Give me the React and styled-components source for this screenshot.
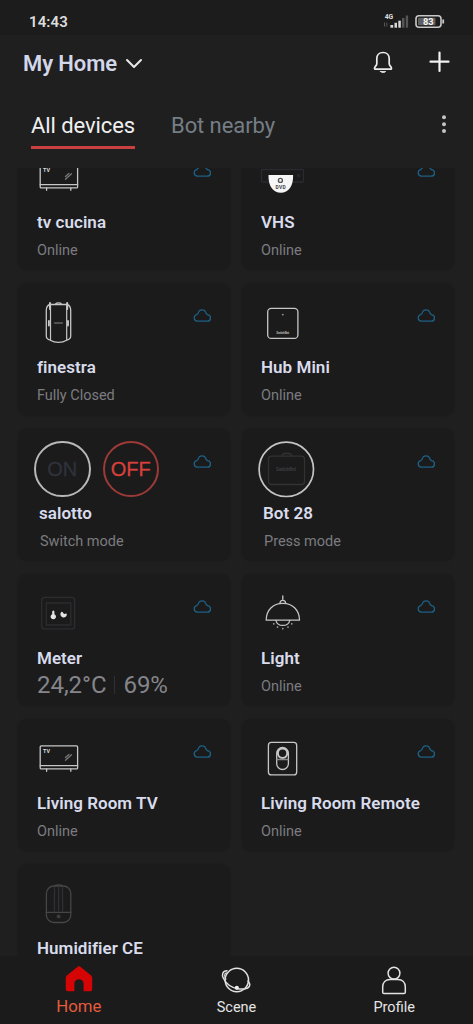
import React from "react";
import styled, { createGlobalStyle } from "styled-components";

const GlobalStyle = createGlobalStyle`
  *, *::before, *::after { box-sizing: border-box; }
  html, body { margin: 0; padding: 0; background: #1f1f1f; }
  body { font-family: Roboto, "Liberation Sans", sans-serif; }
  svg { display: block; flex: none; }
`;

const Screen = styled.div`
  display: flex;
  flex-direction: column;
  width: 473px;
  height: 1024px;
  overflow: hidden;
  background: #1f1f1f;
`;

const StatusBar = styled.div`
  display: flex;
  align-items: flex-start;
  justify-content: space-between;
  height: 35px;
  padding: 13px 28px 0 29px;
  background: #1c1c1c;
`;

const Clock = styled.div`
  font-size: 15px;
  line-height: 18px;
  font-weight: 600;
  letter-spacing: 0.1px;
  color: #dcdcdc;
`;

const Header = styled.header`
  display: flex;
  align-items: center;
  justify-content: space-between;
  height: 56px;
  padding: 0 23px 0 23px;
`;

const HomePicker = styled.div`
  display: flex;
  align-items: center;
  gap: 8px;
  padding-top: 1px;
  font-size: 22px;
  line-height: 28px;
  font-weight: 600;
  letter-spacing: -0.1px;
  color: #d3d7ea;
`;

const HeaderActions = styled.div`
  display: flex;
  align-items: center;
  gap: 35px;
  padding-bottom: 3px;
`;

const Tabs = styled.nav`
  display: flex;
  align-items: flex-start;
  height: 77px;
  padding: 19px 24px 0 31px;
`;

const Tab = styled.div`
  width: 104px;
  height: 39px;
  margin-right: 36px;
  padding-top: 2px;
  font-size: 22px;
  line-height: 28px;
  letter-spacing: -0.08px;
  white-space: nowrap;
  color: ${(p) => (p.$active ? "#f0f0f0" : "#757e85")};
  border-bottom: 3px solid ${(p) => (p.$active ? "#c8403f" : "transparent")};
`;

const MoreButton = styled.div`
  display: flex;
  margin: 4px 0 0 auto;
`;

const DeviceList = styled.main`
  flex: 1;
  min-height: 0;
  overflow: hidden;
`;

const DeviceGrid = styled.div`
  display: grid;
  grid-template-columns: 212px 212px;
  grid-auto-rows: 132.3px;
  gap: 13px 12px;
  margin: -30px 0 0 18px;
`;

const Card = styled.article`
  padding: 12px 18.6px 0 16px;
  border-radius: 9px;
  background: #1b1b1b;
  box-shadow: 0 0 2px #1c1c1c;
`;

const CardTop = styled.div`
  display: flex;
  justify-content: space-between;
  height: 57px;
`;

const Art = styled.div`
  display: flex;
  gap: 12px;
`;

const CloudSlot = styled.div`
  padding-top: 14px;
`;

const DeviceName = styled.div`
  margin: 4px 0 0 ${(p) => (p.$inset ? 5 : 3)}px;
  font-size: 17px;
  line-height: 22px;
  font-weight: 650;
  letter-spacing: 0.04px;
  white-space: nowrap;
  color: #d9dcec;
`;

const DeviceState = styled.div`
  margin: 10px 0 0 ${(p) => (p.$inset ? 6 : 3)}px;
  font-size: 14.5px;
  line-height: 16px;
  letter-spacing: -0.02px;
  white-space: nowrap;
  color: #7c7c80;
`;

const Reading = styled.div`
  display: flex;
  align-items: center;
  gap: 8px;
  margin: 3px 0 0 3px;
  font-size: 24px;
  line-height: 26px;
  letter-spacing: -0.05px;
  color: #85858b;
`;

const Divider = styled.span`
  width: 1px;
  height: 18px;
  background: #303034;
`;

const RoundButton = styled.div`
  display: flex;
  align-items: center;
  justify-content: center;
  width: 56.5px;
  height: 56.5px;
  padding-top: 1px;
  border: 2px solid ${(p) => (p.$off ? "#9c3a37" : "#b8b8b8")};
  border-radius: 50%;
  font-family: "Liberation Sans", Arial, sans-serif;
  font-size: 20px;
  color: ${(p) => (p.$off ? "#d8403b" : "#2e323b")};
  -webkit-text-stroke: 0.3px currentColor;
`;

const BottomNav = styled.footer`
  display: grid;
  grid-template-columns: repeat(3, 1fr);
  height: 68px;
  background: #1b1b1b;
`;

const NavItem = styled.div`
  display: flex;
  flex-direction: column;
  align-items: center;
  gap: 3px;
  padding-top: 9px;
  font-size: ${(p) => (p.$active ? 16.8 : 14.5)}px;
  line-height: 20px;
  color: ${(p) => (p.$active ? "#e35a3d" : "#e4e4e4")};
`;

const line = {
  fill: "none",
  stroke: "#c6c6c6",
  strokeWidth: 1.3,
  strokeLinecap: "round",
  strokeLinejoin: "round",
};

const ArtSvg = ({ children, ...rest }) => (
  <svg width="57" height="57" viewBox="0 0 57 57" {...line} {...rest}>
    {children}
  </svg>
);

const TvArt = () => (
  <ArtSvg>
    <rect x="6.2" y="14.9" width="37.4" height="23" rx="1" />
    <path d="M6.2 34.6H43.6M12.6 38v2.3M36.8 38v2.3" />
    <path d="M31.5 29.3l6-5.6M31.5 26.6l3.4-3.1" stroke="#777" />
    <text x="9" y="22" fontSize="5.4" fontWeight="700" fill="#ddd" stroke="none">TV</text>
  </ArtSvg>
);

const DvdArt = () => (
  <ArtSvg>
    <rect x="3.5" y="19.5" width="42" height="12.5" rx="1" stroke="#2a2a31" />
    <circle cx="40.5" cy="25.5" r="1" stroke="#2a2a31" />
    <path d="M10.5 25h24.6c.4 11-4.6 17.700-12.300 17.700S10.100 36 10.500 25z" fill="#f6f6f6" stroke="none" />
    <circle cx="22.4" cy="30.4" r="2" stroke="#555" strokeWidth="1.4" />
    <text x="17.6" y="39.2" fontSize="4.9" fontWeight="700" fill="#444" stroke="none" textLength="10">DVD</text>
  </ArtSvg>
);

const CurtainArt = () => (
  <ArtSvg>
    <path d="M16 9.5h17c2.500.7 3.700 3 3.700 6V41c0 2.500-1.500 3.600-4 4.200-2.400 1.500-4.800 2.200-8.200 2.200s-5.800-.7-8.200-2.200c-2.500-.6-4-1.700-4-4.200V15.500c0-3 1.200-5.300 3.700-6z" />
    <path d="M16.5 8.5V44.7M32.7 8.5V44.7" strokeWidth="1.2" />
    <path d="M16 8v6M33.2 8v6" strokeWidth="2" />
    <path d="M21.5 9c1-1.500 5-1.500 6 0" />
    <path d="M14.9 26v4.500M34 26v4.500" strokeWidth="1.9" />
    <path d="M20.5 28h8" stroke="#888" strokeWidth="1" />
  </ArtSvg>
);

const HubArt = () => (
  <ArtSvg>
    <rect x="9.7" y="13.4" width="30.2" height="30" rx="3.5" />
    <circle cx="24.8" cy="19.6" r=".9" fill="#999" stroke="none" />
    <text x="18.2" y="38.8" fontSize="3.3" fontWeight="700" fill="#aaa" stroke="none" textLength="13">SwitchBot</text>
  </ArtSvg>
);

const BotArt = () => (
  <ArtSvg stroke="#323236">
    <circle cx="28.3" cy="28.3" r="27.2" stroke="#c4c4c4" strokeWidth="1.7" />
    <rect x="10.5" y="15.2" width="36" height="28.3" rx="3" />
    <path d="M24 14.500c.5-3 9-3 9.500 0" />
    <text x="18" y="30.3" fontSize="4.5" fontWeight="700" fill="#3c3c40" stroke="none" textLength="20">SwitchBot</text>
  </ArtSvg>
);

const MeterArt = () => (
  <ArtSvg stroke="#2d2d31">
    <rect x="7.7" y="11.4" width="33" height="31.5" rx="3" />
    <rect x="12.3" y="17" width="24.5" height="22" />
    <g stroke="none" fill="#e4e4e4">
      <path d="M18.2 25.500q1.100-2 2.200 0v2.700a2.700 2.700 0 1 1-2.200 0z" />
      <path d="M27.500 25.800c1.600-.3 1.500 2 2.800 2.100.8 0 1.400-.6 2.400-.2a3.200 3.200 0 1 1-5.200-1.900z" />
    </g>
  </ArtSvg>
);

const LampArt = () => (
  <ArtSvg>
    <path d="M24.800 9.800v4.500M22 17.300c0-3.800 5.600-3.800 5.600 0" />
    <path d="M8.200 34.200C8.200 24 15 17.300 24.800 17.300S41.500 24 41.500 34.200z" />
    <path d="M18 34.500c1.200 6.600 12.500 6.600 13.700 0" />
    <path d="M15.800 37.800v.2M19.500 41.100v.2M24.800 42.600v.2M30 41.100v.2M33.800 37.800v.2" stroke="#aaa" strokeWidth="1.6" />
  </ArtSvg>
);

const RemoteArt = () => (
  <ArtSvg>
    <rect x="10.4" y="11.4" width="28.3" height="32.5" rx="3" />
    <rect x="18.7" y="16.5" width="11.7" height="22" rx="5.85" />
    <circle cx="24.55" cy="22.2" r="4.7" strokeWidth="2" />
    <path d="M19.2 28.500h10.700" stroke="#888" />
  </ArtSvg>
);

const HumidifierArt = () => (
  <ArtSvg stroke="#464648">
    <rect x="12.4" y="10" width="24.4" height="36.5" rx="7.5" />
    <path d="M12.400 36.400h24.400M20.500 10c1.500-1.500 6.700-1.500 8.200 0" />
    <path d="M20.300 11c.8 7-.5 16 .2 24.500M24.600 11v24.500M28.700 11c-.8 7 .5 16-.2 24.500" stroke="#303032" />
    <circle cx="24.6" cy="40.5" r="2" fill="#3c3c3c" stroke="none" />
  </ArtSvg>
);

const Cloud = () => (
  <svg width="18.2" height="13" viewBox="0 0 18.2 13" fill="none" stroke="#1d6085" strokeWidth="1.3" strokeLinejoin="round">
    <path d="M4.300 12.200h9.700a3.300 3.300 0 0 0 .4-6.600 1.900 1.900 0 0 0-1.300-1C12.700 2.300 11 .8 9.100.8S5.500 2.200 5.100 4.500a2 2 0 0 0-1.300 1.200 3.300 3.300 0 0 0 .5 6.500z" />
  </svg>
);

const StatusIcons = () => (
  <svg width="62" height="16" viewBox="0 0 62 16">
    <text x="1.7" y="6" fontSize="6.8" fontWeight="700" fill="#ddd">4G</text>
    <path d="M1.500 9.500v4M3.800 9.500v4" stroke="#555" strokeWidth="1" />
    <g fill="#d8d8d8">
      <rect x="7.4" y="12" width="2.8" height="2.7" />
      <rect x="11.5" y="9.8" width="2.5" height="4.9" />
      <rect x="15.3" y="7.7" width="2.5" height="7" />
    </g>
    <rect x="19" y="5" width="2.5" height="9.7" fill="#555" />
    <rect x="22.8" y="2.5" width="2.3" height="12.2" fill="#555" />
    <rect x="33" y="2.7" width="25" height="11.6" rx="3" fill="none" stroke="#c8c8c8" strokeWidth="1.6" />
    <rect x="35" y="4.7" width="17.5" height="7.6" rx="1" fill="#606060" />
    <path d="M60.200 6.500v4" stroke="#c8c8c8" strokeWidth="1.8" />
    <text x="45.3" y="12" fontSize="9.3" fontWeight="700" fill="#f4f4f4" textAnchor="middle">83</text>
  </svg>
);

const Chevron = () => (
  <svg width="18" height="12" viewBox="0 0 18 12" fill="none" stroke="#e6e6e6" strokeWidth="2.1" strokeLinecap="round" strokeLinejoin="round">
    <path d="M2 2l7 7 7-7" />
  </svg>
);

const Bell = () => (
  <svg width="20" height="24" viewBox="0 0 20 24" fill="none" stroke="#ececec" strokeWidth="1.7" strokeLinecap="round" strokeLinejoin="round">
    <path d="M10 2.500c-4 0-6.200 2.600-6.200 6v5.200c0 2-2.300 2.800-2.300 4.700 0 .5.300.8.800.8h15.400c.5 0 .8-.3.800-.8 0-1.900-2.300-2.700-2.300-4.700V8.500c0-3.400-2.200-6-6.200-6z" />
    <path d="M7.500 21.500h5.200c-.8 1.300-4.400 1.300-5.200 0z" fill="#ececec" strokeWidth=".8" />
  </svg>
);

const Plus = () => (
  <svg width="22" height="22" viewBox="0 0 22 22" fill="none" stroke="#f2f2f2" strokeWidth="2.2" strokeLinecap="round">
    <path d="M11.500 1.500v18.500M2.500 10.700h18" />
  </svg>
);

const HomeIcon = () => (
  <svg width="28" height="28" viewBox="0 0 28 28">
    <path d="M14 1.300c.8 0 1.300.4 1.900.9l10 8c.8.700 1.300 1.500 1.300 2.500v11.500c0 1.200-.8 2-2 2h-6.600v-7.400c0-3-2-4.600-4.600-4.600s-4.600 1.600-4.600 4.600v7.400H2.800c-1.200 0-2-.8-2-2V12.700c0-1 .5-1.800 1.300-2.500l10-8c.6-.5 1.100-.9 1.900-.9z" fill="#d60505" />
  </svg>
);

const SceneIcon = () => (
  <svg width="31" height="30" viewBox="0 0 31 30" fill="none" stroke="#e2e2e2" strokeWidth="1.5" strokeLinecap="round">
    <circle cx="15.8" cy="15" r="11.7" />
    <path d="M6 5.700C1.500 6 .4 9.500 2.500 13.500c3 5.800 9 9.800 15.500 10.400 5 .5 9.700-.7 10.600-3.200.6-1.500-.2-3-1.600-4.700" />
    <path d="M5.400 7.800C2.700 8.500 3.600 12 5 14" strokeWidth="1.1" />
    <circle cx="15.8" cy="22.8" r="2.1" fill="#eee" stroke="none" />
  </svg>
);

const ProfileIcon = () => (
  <svg width="26" height="30" viewBox="0 0 26 30" fill="none" stroke="#e2e2e2" strokeWidth="1.5" strokeLinejoin="round">
    <circle cx="13" cy="8.2" r="5.9" />
    <path d="M1.700 24.500v-2.500c0-4.500 3-7.500 7.300-7.500h8c4.300 0 7.300 3 7.300 7.500v5.200c0 .8-.5 1.300-1.300 1.300H3c-.8 0-1.300-.5-1.300-1.300z" />
  </svg>
);

const devices = [
  { name: "tv cucina", state: "Online", art: <TvArt /> },
  { name: "VHS", state: "Online", art: <DvdArt /> },
  { name: "finestra", state: "Fully Closed", art: <CurtainArt /> },
  { name: "Hub Mini", state: "Online", art: <HubArt /> },
  {
    name: "salotto",
    state: "Switch mode",
    inset: true,
    art: (
      <>
        <RoundButton>ON</RoundButton>
        <RoundButton $off>OFF</RoundButton>
      </>
    ),
  },
  { name: "Bot 28", state: "Press mode", inset: true, art: <BotArt /> },
  { name: "Meter", reading: ["24,2°C", "69%"], art: <MeterArt /> },
  { name: "Light", state: "Online", art: <LampArt /> },
  { name: "Living Room TV", state: "Online", art: <TvArt /> },
  { name: "Living Room Remote", state: "Online", art: <RemoteArt /> },
  { name: "Humidifier CE", art: <HumidifierArt />, offline: true },
];

const DeviceCard = ({ device }) => (
  <Card>
    <CardTop>
      <Art>{device.art}</Art>
      {!device.offline && (
        <CloudSlot>
          <Cloud />
        </CloudSlot>
      )}
    </CardTop>
    <DeviceName $inset={device.inset}>{device.name}</DeviceName>
    {device.state && <DeviceState $inset={device.inset}>{device.state}</DeviceState>}
    {device.reading && (
      <Reading>
        <span>{device.reading[0]}</span>
        <Divider />
        <span>{device.reading[1]}</span>
      </Reading>
    )}
  </Card>
);

export default function App() {
  return (
    <Screen>
      <GlobalStyle />
      <StatusBar>
        <Clock>14:43</Clock>
        <StatusIcons />
      </StatusBar>
      <Header>
        <HomePicker>
          My Home
          <Chevron />
        </HomePicker>
        <HeaderActions>
          <Bell />
          <Plus />
        </HeaderActions>
      </Header>
      <Tabs>
        <Tab $active>All devices</Tab>
        <Tab>Bot nearby</Tab>
        <MoreButton>
          <svg width="10" height="20" viewBox="0 0 10 20" fill="#c4c4c4">
            <circle cx="5" cy="3.3" r="2" />
            <circle cx="5" cy="10.2" r="2" />
            <circle cx="5" cy="17" r="2" />
          </svg>
        </MoreButton>
      </Tabs>
      <DeviceList>
        <DeviceGrid>
          {devices.map((d) => (
            <DeviceCard key={d.name} device={d} />
          ))}
        </DeviceGrid>
      </DeviceList>
      <BottomNav>
        <NavItem $active>
          <HomeIcon />
          Home
        </NavItem>
        <NavItem>
          <SceneIcon />
          Scene
        </NavItem>
        <NavItem>
          <ProfileIcon />
          Profile
        </NavItem>
      </BottomNav>
    </Screen>
  );
}
